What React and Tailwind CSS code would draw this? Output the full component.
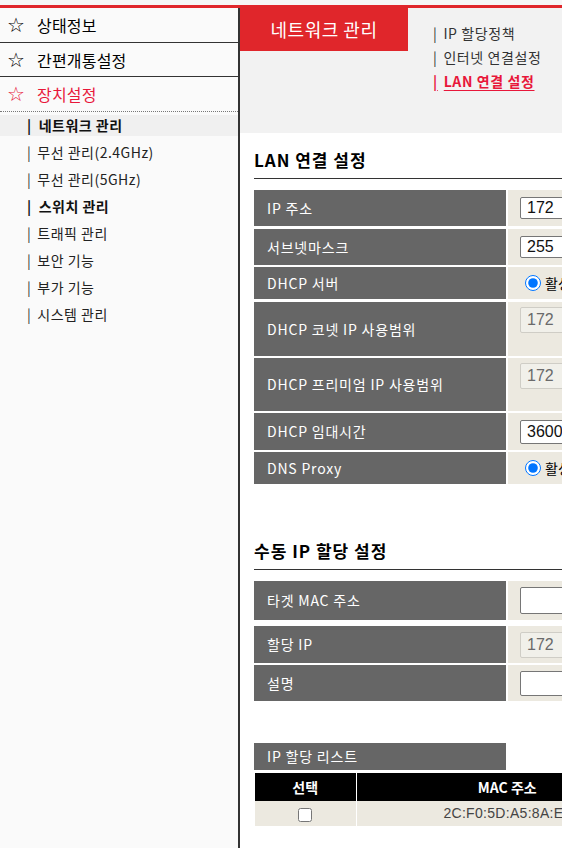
import React from "react";

// sidebar menu data
const topMenu = [
  { label: "상태정보", h: "h-[35px]", active: false },
  { label: "간편개통설정", h: "h-[34px]", active: false },
  { label: "장치설정", h: "h-[35px]", active: true },
];

const subMenu = [
  { label: "네트워크 관리", bold: true, current: true },
  { label: "무선 관리(2.4GHz)" },
  { label: "무선 관리(5GHz)" },
  { label: "스위치 관리", bold: true },
  { label: "트래픽 관리" },
  { label: "보안 기능" },
  { label: "부가 기능" },
  { label: "시스템 관리" },
];

const kr = { fontFamily: '"Noto Sans CJK KR", "Liberation Sans", sans-serif' };
const latin = { fontFamily: '"Liberation Sans", Arial, sans-serif' };

function TextInput({ value = "", disabled = false, h = "h-[22px]" }) {
  return (
    <input
      type="text"
      defaultValue={value}
      disabled={disabled}
      style={latin}
      className={
        "w-[110px] rounded-[2px] border px-[6px] text-[16px] outline-none " +
        h +
        (disabled
          ? " border-[#cfcdc6] bg-[#f1f0ea] text-[#6a6a6a]"
          : " border-[#767676] bg-white text-[#111]")
      }
    />
  );
}

function Radio() {
  return (
    <div className="flex items-center gap-[4px] pl-[17px] text-[14px] text-black">
      <input
        type="radio"
        defaultChecked
        className="m-0 h-[16px] w-[16px] shrink-0 accent-[#0075ff]"
      />
      <span className="whitespace-nowrap">활성</span>
      <input type="radio" className="ml-[8px] h-[16px] w-[16px] shrink-0" />
      <span className="whitespace-nowrap">비활성</span>
    </div>
  );
}

function Row({ label, h, mt, top = false, children }) {
  return (
    <div className={"flex " + h + " " + mt}>
      <div className="flex w-[252px] shrink-0 items-center whitespace-nowrap bg-[#666666] pl-[13px] text-[14px] tracking-[0.8px] text-white">
        {label}
      </div>
      <div
        className={
          "ml-[2px] flex w-[260px] shrink-0 bg-[#ece9e0] " +
          (top ? "items-start pt-[5px] pl-[12px]" : "items-center pl-[12px]")
        }
      >
        {children}
      </div>
    </div>
  );
}

function SectionTitle({ children, mt }) {
  return (
    <h2
      className={
        "border-b border-[#333] pb-[8px] text-[17px] font-bold leading-[20px] tracking-[1px] text-black " +
        mt
      }
    >
      {children}
    </h2>
  );
}

export default function App() {
  return (
    <div className="flex h-[848px] w-[562px] flex-col overflow-hidden bg-white" style={kr}>
      <div className="h-[5px] shrink-0 bg-[#f6f6f6]" />
      <div className="h-[3px] shrink-0 bg-[#e0262b]" />

      <div className="flex min-h-0 flex-1">
        {/* ============ Sidebar ============ */}
        <aside className="w-[240px] shrink-0 border-r-2 border-[#333] bg-[#fafafa]">
          {topMenu.map((m, i) => (
            <div
              key={m.label}
              className={
                "flex items-center pl-[7px] text-[16px] tracking-[0.2px] " +
                m.h +
                (i < 2 ? " border-b border-[#333]" : " border-b border-dotted border-[#777]") +
                (m.active ? " text-[#e8173a]" : " text-black")
              }
            >
              <span
                className="w-[30px] text-[20px] leading-none"
                style={{ fontFamily: '"DejaVu Sans", sans-serif' }}
              >
                ☆
              </span>
              <span>{m.label}</span>
            </div>
          ))}

          <div>
            {subMenu.map((s) => (
              <div key={s.label} className="h-[27px] py-[3px]">
                <div
                  className={
                    "flex h-[21px] items-center whitespace-nowrap pl-[27px] text-[14px] tracking-[0.5px] " +
                    (s.current ? "bg-[#f0f0f0] " : "") +
                    (s.bold ? "font-bold text-[#111]" : "text-[#222]")
                  }
                >
                  <span className={s.bold ? "mr-[7px] text-[#111]" : "mr-[6px] text-[#333]"}>|</span>
                  {s.label}
                </div>
              </div>
            ))}
          </div>
        </aside>

        {/* ============ Main ============ */}
        <main className="min-w-0 flex-1 overflow-hidden">
          <div className="flex h-[125px] w-[322px] bg-[#f2f2f2]">
            <div className="flex h-[43px] w-[168px] shrink-0 items-center justify-center bg-[#e0262b] text-[18px] tracking-[0.5px] text-white">
              네트워크 관리
            </div>
            <div className="ml-[25px] pt-[13px] text-[14px] leading-[24px] tracking-[0.6px]">
              <div className="whitespace-nowrap text-[#333]">
                <span className="mr-[6px]">|</span>IP 할당정책
              </div>
              <div className="whitespace-nowrap text-[#333]">
                <span className="mr-[6px]">|</span>인터넷 연결설정
              </div>
              <div className="whitespace-nowrap font-bold text-[#e8173a] underline underline-offset-[3px]">
                <span className="mr-[6px]">|</span>LAN 연결 설정
              </div>
            </div>
          </div>

          <div className="w-[560px] px-[14px]">
            <SectionTitle mt="mt-[17px]">LAN 연결 설정</SectionTitle>

            <div className="mt-[11px]">
              <Row label="IP 주소" h="h-[36px]" mt="">
                <TextInput value="172" />
              </Row>
              <Row label="서브넷마스크" h="h-[36px]" mt="mt-[3px]">
                <TextInput value="255" />
              </Row>
              <Row label="DHCP 서버" h="h-[32px]" mt="mt-[2px]">
                <div className="-ml-[12px]">
                  <Radio />
                </div>
              </Row>
              <Row label="DHCP 코넷 IP 사용범위" h="h-[54px]" mt="mt-[3px]" top>
                <TextInput value="172" disabled h="h-[26px]" />
              </Row>
              <Row label="DHCP 프리미엄 IP 사용범위" h="h-[53px]" mt="mt-[2px]" top>
                <TextInput value="172" disabled h="h-[26px]" />
              </Row>
              <Row label="DHCP 임대시간" h="h-[37px]" mt="mt-[2px]">
                <TextInput value="3600" h="h-[24px]" />
              </Row>
              <Row label="DNS Proxy" h="h-[32px]" mt="mt-[2px]">
                <div className="-ml-[12px]">
                  <Radio />
                </div>
              </Row>
            </div>

            <SectionTitle mt="mt-[57px]">수동 IP 할당 설정</SectionTitle>

            <div className="mt-[11px]">
              <Row label="타겟 MAC 주소" h="h-[39px]" mt="">
                <TextInput h="h-[27px]" />
              </Row>
              <Row label="할당 IP" h="h-[37px]" mt="mt-[6px]">
                <TextInput value="172" disabled h="h-[26px]" />
              </Row>
              <Row label="설명" h="h-[36px]" mt="mt-[2px]">
                <TextInput h="h-[25px]" />
              </Row>
            </div>

            <div className="mt-[42px] flex h-[27px] w-[252px] items-center bg-[#666666] pl-[13px] text-[14px] tracking-[0.8px] text-white">
              IP 할당 리스트
            </div>

            <table className="mt-[3px] ml-[1px] border-collapse text-[14px]">
              <thead>
                <tr className="h-[28px] bg-black text-white">
                  <th className="w-[101px] border-r border-white font-bold">선택</th>
                  <th className="w-[302px] font-bold">MAC 주소</th>
                </tr>
              </thead>
              <tbody>
                <tr className="h-[25px] bg-[#ece9e0]">
                  <td className="border-r border-white text-center">
                    <input type="checkbox" className="m-0 h-[14px] w-[14px] align-middle" />
                  </td>
                  <td className="text-center text-[#444]" style={latin}>
                    <span className="pl-[2px] text-[14px] tracking-[0.3px]">2C:F0:5D:A5:8A:EB</span>
                  </td>
                </tr>
              </tbody>
            </table>
          </div>
        </main>
      </div>
    </div>
  );
}
